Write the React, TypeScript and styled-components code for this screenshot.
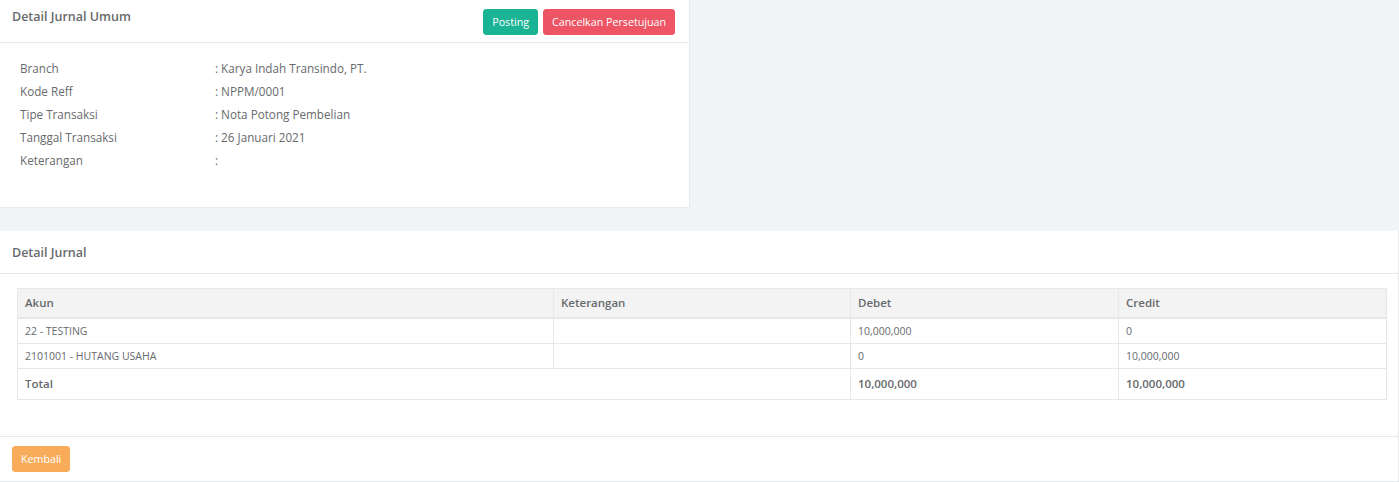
import React from 'react';
import styled, {createGlobalStyle} from "styled-components";

const GlobalStyle = createGlobalStyle`
  body {
    margin: 0;
    background: #f3f4f8;
    font-family: "Open Sans", "Liberation Sans", sans-serif;
    color: #676a6c;
  }
`

const Page = styled.div`
  display: flex;
  flex-direction: column;
  width: 1399px;
  height: 482px;
  overflow: hidden;
`
const Card = styled.div<{ $width?: string }>`
  width: ${props => props.$width ?? '100%'};
  background: #ffffff;
  border-right: 1px solid #e7eaec;
  border-bottom: 1px solid #e7eaec;
  box-sizing: border-box;
`
const CardHeader = styled.div<{ $height: number }>`
  display: flex;
  align-items: flex-start;
  justify-content: space-between;
  height: ${props => props.$height}px;
  padding: 0 14px 0 12px;
  border-bottom: 1px solid #e7eaec;
  box-sizing: border-box;
`
const Title = styled.h5<{ $top: number }>`
  margin: ${props => props.$top}px 0 0 0;
  font-size: 12.5px;
  font-weight: 600;
  color: #676a6c;
`
const ButtonGroup = styled.div`
  display: flex;
  gap: 5px;
  margin-top: 9px;
`
const Button = styled.button<{ $color: string }>`
  background: ${props => props.$color};
  border: 1px solid ${props => props.$color};
  border-radius: 3px;
  color: #ffffff;
  font-family: inherit;
  font-size: 10.7px;
  height: 26px;
  padding: 0 8px;
  cursor: pointer;
`
const InfoBody = styled.div`
  padding: 14px 20px 35px 20px;
`
const InfoRow = styled.div`
  display: grid;
  grid-template-columns: 195px 1fr;
  font-size: 11.7px;
  line-height: 23px;
`
const Gap = styled.div`
  height: 23px;
`
const TableWrap = styled.div`
  padding: 14px 11px 36px 17px;
  border-bottom: 1px solid #e7eaec;
`
const Table = styled.table`
  width: 100%;
  table-layout: fixed;
  border-collapse: collapse;
  border: 1px solid #e7eaec;
  font-size: 11px;
`
const Th = styled.th<{ $width?: number }>`
  box-sizing: border-box;
  width: ${props => props.$width ? props.$width + 'px' : 'auto'};
  background: #f3f3f4;
  border: 1px solid #e7e7e7;
  border-bottom-width: 2px;
  text-align: left;
  font-weight: 600;
  font-size: 11.5px;
  height: 29px;
  padding: 0 7px;
`
const Td = styled.td<{ $bold?: boolean }>`
  border: 1px solid #e7e7e7;
  padding: 0 7px;
  height: 24px;
  font-weight: ${props => props.$bold ? 600 : 400};
  font-size: ${props => props.$bold ? '11.5px' : '10.5px'};
`
const TotalTd = styled(Td)`
  height: 30px;
`
const Footer = styled.div`
  padding: 9px 12px 9px 12px;
`

const info = [
    ["Branch", ": Karya Indah Transindo, PT."],
    ["Kode Reff", ": NPPM/0001"],
    ["Tipe Transaksi", ": Nota Potong Pembelian"],
    ["Tanggal Transaksi", ": 26 Januari 2021"],
    ["Keterangan", ":"],
]

const rows = [
    ["22 - TESTING", "", "10,000,000", "0"],
    ["2101001 - HUTANG USAHA", "", "0", "10,000,000"],
]

const App: React.FC = () => {
    return (
        <Page>
            <GlobalStyle/>
            <Card $width="690px">
                <CardHeader $height={43}>
                    <Title $top={8}>Detail Jurnal Umum</Title>
                    <ButtonGroup>
                        <Button $color="#1ab394">Posting</Button>
                        <Button $color="#ed5565">Cancelkan Persetujuan</Button>
                    </ButtonGroup>
                </CardHeader>
                <InfoBody>
                    {info.map(([label, value]) => (
                        <InfoRow key={label}>
                            <span>{label}</span>
                            <span>{value}</span>
                        </InfoRow>
                    ))}
                </InfoBody>
            </Card>
            <Gap/>
            <Card>
                <CardHeader $height={43}>
                    <Title $top={13}>Detail Jurnal</Title>
                </CardHeader>
                <TableWrap>
                    <Table>
                        <thead>
                        <tr>
                            <Th $width={536}>Akun</Th>
                            <Th $width={297}>Keterangan</Th>
                            <Th $width={268}>Debet</Th>
                            <Th>Credit</Th>
                        </tr>
                        </thead>
                        <tbody>
                        {rows.map(r => (
                            <tr key={r[0]}>
                                {r.map((c, i) => <Td key={i}>{c}</Td>)}
                            </tr>
                        ))}
                        <tr>
                            <TotalTd $bold colSpan={2}>Total</TotalTd>
                            <TotalTd $bold>10,000,000</TotalTd>
                            <TotalTd $bold>10,000,000</TotalTd>
                        </tr>
                        </tbody>
                    </Table>
                </TableWrap>
                <Footer>
                    <Button $color="#f8ac59">Kembali</Button>
                </Footer>
            </Card>
        </Page>
    );
}

export default App;
